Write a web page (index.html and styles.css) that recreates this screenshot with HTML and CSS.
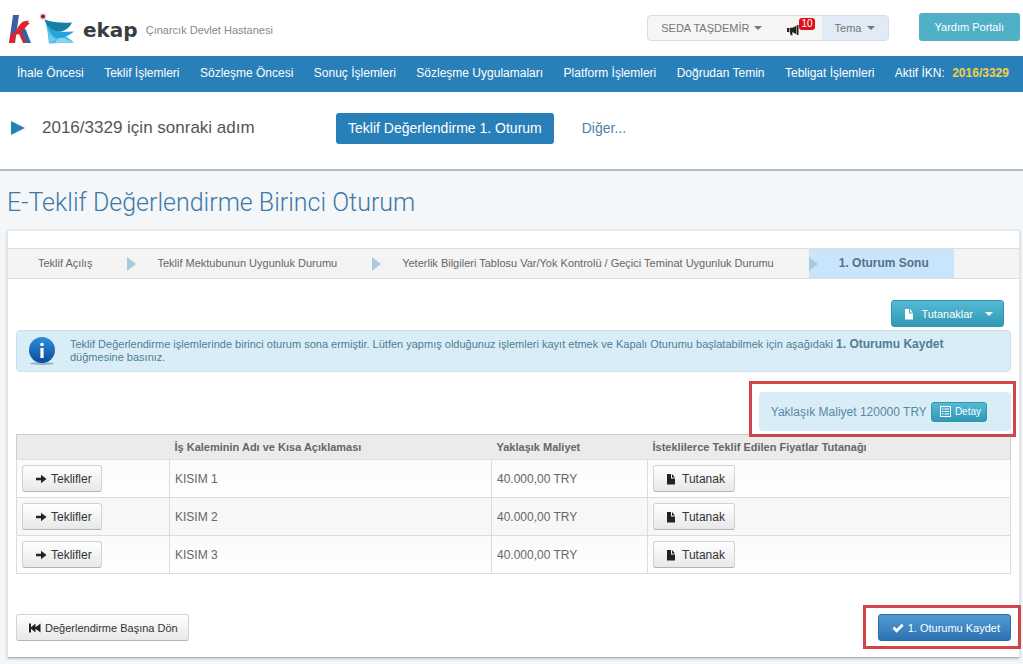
FILE: index.html
```html
<!DOCTYPE html>
<html lang="tr">
<head>
<meta charset="utf-8">
<meta name="viewport" content="width=device-width, initial-scale=1">
<title>E-Teklif Değerlendirme Birinci Oturum</title>
<link rel="stylesheet" href="styles.css">
</head>
<body>
<svg class="sprite" aria-hidden="true">
  <symbol id="i-file" viewBox="0 0 10 12"><path fill="currentColor" d="M1 1h4v4.500h4V11.500H1zM6 1l3 3.500H6z"/></symbol>
  <symbol id="i-arrow" viewBox="0 0 12 10"><path fill="currentColor" d="M1 3.700h5V.800L11.500 5 6 9.200V6.300H1z"/></symbol>
  <symbol id="i-rewind" viewBox="0 0 12 10"><path fill="currentColor" d="M0 .5h2v3.700L6.500.500v3.700L11.500.500v9L6.500 5.800v3.700L2 5.800v3.700H0z"/></symbol>
  <symbol id="i-check" viewBox="0 0 12 10"><path fill="currentColor" d="M.500 5.500 2.500 3.500 4.700 5.700 9.700.700l2 2-7 7z"/></symbol>
  <symbol id="i-horn" viewBox="0 0 12 12"><path fill="currentColor" d="M0 4h2v4H0zM2.500 4C5 4 7.500 3.200 9.500 1.500v9C8 9.300 6.500 8.500 5 8.200l.7 3H3.700L2.800 8zM10 1h1.500v10H10z"/></symbol>
  <symbol id="i-list" viewBox="0 0 11 11"><path fill="currentColor" fill-rule="evenodd" d="M0 0h11v11H0zM1 1v9h9V1zM2 2.500h1.500v1H2zM4.500 2.500H9v1H4.500zM2 5h1.500v1H2zM4.500 5H9v1H4.500zM2 7.500h1.500v1H2zM4.500 7.500H9v1H4.500z"/></symbol>
</svg>

<header class="top">
  <a class="brand" href="#">
    <svg class="mark" viewBox="0 0 66 34" role="img" aria-label="ekap">
      <path fill="#3a5fa5" d="M5 2H11L7 30H1z"/>
      <path fill="#e5202b" d="M2 24Q4 20 8 18L6.500 30H1z"/>
      <path fill="#e5202b" d="M7 22Q9 13 15 8.500L21 7.500 20 10 22 10Q18 13 16.500 16L18 30H15L11 21z"/>
      <path fill="#3a5fa5" d="M13 17.500 17.500 16 23 30H17.500z"/>
      <circle cx="35" cy="3.500" r="3" fill="#f0a3a8"/>
      <circle cx="35" cy="3.500" r="1.700" fill="#6c1725"/>
      <path fill="#4dbce8" d="M37 6.500 53 19 66 29.500 41 30.500Q40 18 37 6.500z"/>
      <path fill="#86d4f2" d="M50 25 56 25 65 29.500 47 30z"/>
      <path fill="#27a3d8" d="M37 7Q42 17 53 19L66 18.500Q60 24 50 25.500 42 24 37 7z"/>
      <path fill="#147ea6" d="M36.500 6.500Q48 10.500 64 9.500 62 15 54 18.500 41 19 36.500 6.500z"/>
      <path fill="#6bcaf0" d="M38 12Q40 22 48 26L42 30.500Q41 20 38 12z"/>
    </svg>
    <span class="brand-name">ekap</span>
    <span class="org">Çınarcık Devlet Hastanesi</span>
  </a>
  <div class="user-bar">
    <button class="user-item user-name">SEDA TAŞDEMİR <i class="caret"></i></button>
    <button class="user-item notices" aria-label="Duyurular"><svg class="icon-horn"><use href="#i-horn"/></svg><span class="badge">10</span></button>
    <button class="user-item theme">Tema <i class="caret"></i></button>
  </div>
  <a class="help" href="#">Yardım Portalı</a>
</header>

<nav class="menu">
  <a href="#">İhale Öncesi</a>
  <a href="#">Teklif İşlemleri</a>
  <a href="#">Sözleşme Öncesi</a>
  <a href="#">Sonuç İşlemleri</a>
  <a href="#">Sözleşme Uygulamaları</a>
  <a href="#">Platform İşlemleri</a>
  <a href="#">Doğrudan Temin</a>
  <a href="#">Tebligat İşlemleri</a>
  <span class="active-ikn">Aktif İKN: <strong>2016/3329</strong></span>
</nav>

<section class="next">
  <i class="play"></i>
  <p class="next-label">2016/3329 için sonraki adım</p>
  <button class="next-btn">Teklif Değerlendirme 1. Oturum</button>
  <a class="next-other" href="#">Diğer...</a>
</section>

<main class="page">
  <h1>E-Teklif Değerlendirme Birinci Oturum</h1>
  <div class="panel">
    <ol class="steps">
      <li>Teklif Açılış</li>
      <li>Teklif Mektubunun Uygunluk Durumu</li>
      <li>Yeterlik Bilgileri Tablosu Var/Yok Kontrolü / Geçici Teminat Uygunluk Durumu</li>
      <li class="current">1. Oturum Sonu</li>
    </ol>
    <div class="content">
      <div class="tools">
        <button class="btn teal"><svg class="icon-file"><use href="#i-file"/></svg>Tutanaklar<i class="caret"></i></button>
      </div>
      <div class="alert">
        <svg class="info" viewBox="0 0 28 30" aria-hidden="true">
          <defs><linearGradient id="ig" x1="0" y1="0" x2="0" y2="1"><stop offset="0" stop-color="#2f8fd8"/><stop offset="1" stop-color="#0a4a9c"/></linearGradient></defs>
          <ellipse cx="14" cy="27.500" rx="12" ry="1.500" fill="#8eb4ca"/>
          <circle cx="14" cy="14" r="13" fill="url(#ig)"/>
          <circle cx="14" cy="8.500" r="1.800" fill="#fff"/>
          <path fill="#fff" d="M12.400 12h3.200v10h-3.200z"/>
        </svg>
        <p>Teklif Değerlendirme işlemlerinde birinci oturum sona ermiştir. Lütfen yapmış olduğunuz işlemleri kayıt etmek ve Kapalı Oturumu başlatabilmek için aşağıdaki <strong>1. Oturumu Kaydet</strong> düğmesine basınız.</p>
      </div>
      <div class="cost">
        <span>Yaklaşık Maliyet 120000 TRY</span>
        <button class="btn teal small"><svg class="icon-list"><use href="#i-list"/></svg>Detay</button>
      </div>
      <table class="parts">
        <colgroup><col class="c-act"><col class="c-name"><col class="c-cost"><col></colgroup>
        <thead>
          <tr><th></th><th>İş Kaleminin Adı ve Kısa Açıklaması</th><th>Yaklaşık Maliyet</th><th>İsteklilerce Teklif Edilen Fiyatlar Tutanağı</th></tr>
        </thead>
        <tbody>
          <tr><td><button class="btn offers"><svg class="icon-arrow"><use href="#i-arrow"/></svg>Teklifler</button></td><td>KISIM 1</td><td>40.000,00 TRY</td><td><button class="btn report"><svg class="icon-file"><use href="#i-file"/></svg>Tutanak</button></td></tr>
          <tr><td><button class="btn offers"><svg class="icon-arrow"><use href="#i-arrow"/></svg>Teklifler</button></td><td>KISIM 2</td><td>40.000,00 TRY</td><td><button class="btn report"><svg class="icon-file"><use href="#i-file"/></svg>Tutanak</button></td></tr>
          <tr><td><button class="btn offers"><svg class="icon-arrow"><use href="#i-arrow"/></svg>Teklifler</button></td><td>KISIM 3</td><td>40.000,00 TRY</td><td><button class="btn report"><svg class="icon-file"><use href="#i-file"/></svg>Tutanak</button></td></tr>
        </tbody>
      </table>
      <div class="actions">
        <button class="btn back"><svg class="icon-arrow"><use href="#i-rewind"/></svg>Değerlendirme Başına Dön</button>
        <div class="save-wrap"><button class="btn save"><svg class="icon-arrow"><use href="#i-check"/></svg>1. Oturumu Kaydet</button></div>
      </div>
    </div>
  </div>
</main>
</body>
</html>
```
FILE: styles.css
```css
* { box-sizing: border-box; }
body {
  margin: 0;
  background: #f3f7fa;
  color: #666;
  font: 12px/18px "Liberation Sans", Arial, sans-serif;
}
a { text-decoration: none; }
button { font-family: inherit; cursor: pointer; }
.sprite { display: none; }
.caret {
  display: inline-block;
  border: 4px solid transparent;
  border-top-color: currentColor;
  border-bottom: 0;
  vertical-align: middle;
}

/* header */
.top {
  display: flex;
  align-items: center;
  height: 56px;
  padding: 0 3px 0 8px;
  background: #fff;
}
.brand { display: flex; align-items: center; flex: 1; padding-top: 4px; color: #888; }
.mark { width: 66px; height: 34px; }
.brand-name {
  margin-left: 9px;
  color: #3c3c3c;
  font: bold 20px/24px "DejaVu Sans", sans-serif;
}
.org { margin-left: 8px; font-size: 11px; }
.user-bar {
  display: flex;
  height: 26px;
  margin-right: 30px;
  border: 1px solid #ddd;
  border-radius: 4px;
  background: #f5f5f5;
  overflow: hidden;
}
.user-item {
  display: flex;
  align-items: center;
  gap: 5px;
  padding: 0 13px;
  border: 0;
  background: none;
  color: #777;
  font-size: 11px;
}
.notices { gap: 0; padding: 0 7px 0 12px; color: #222; }
.icon-horn { width: 12px; height: 12px; margin-top: 4px; }
.badge {
  align-self: flex-start;
  margin-top: 2px;
  padding: 0 2px;
  border-radius: 3px;
  background: #dd1018;
  color: #fff;
  font-size: 10px;
  line-height: 12px;
}
.theme { background: #e1ebf5; }
.help {
  padding: 5px 16px;
  border-radius: 3px;
  background: #50b0c8;
  color: #fff;
  font-size: 11px;
  margin-bottom: 2px;
}

/* menu */
.menu {
  display: flex;
  justify-content: space-between;
  align-items: center;
  height: 36px;
  padding: 0 14px 2px 17px;
  border-bottom: 1px solid #3f78ae;
  background: #2980b9;
  color: #fff;
  white-space: nowrap;
}
.menu a { color: #fff; }
.active-ikn strong { margin-left: 4px; color: #f5cf45; }

/* next step */
.next {
  display: flex;
  align-items: center;
  height: 79px;
  padding: 0 11px 5px;
  border-bottom: 2px solid #b4bcc2;
  background: #fff;
}
.play {
  border: 7px solid transparent;
  border-left: 14px solid #2980b9;
  border-right: 0;
}
.next-label { width: 294px; margin: 0 0 0 17px; color: #555; font-size: 17px; }
.next-btn {
  height: 31px;
  padding: 0 12px;
  border: 0;
  border-radius: 3px;
  background: #2980b9;
  color: #fff;
  font-size: 14px;
}
.next-other { margin-left: 28px; color: #4b7fa8; font-size: 14px; }

/* page */
.page { padding: 0 3px 6px 7px; }
h1 {
  margin: 0;
  padding: 16px 0 11px;
  color: #4178a4;
  font: 300 25px/32px Roboto, sans-serif;
}
.panel {
  padding-top: 17px;
  border: 1px solid #e2e6e9;
  border-bottom-color: #aab0b5;
  border-radius: 2px;
  background: #fff;
  box-shadow: 0 1px 3px rgba(0, 0, 0, 0.2);
}
.steps {
  display: flex;
  margin: 0;
  padding: 0;
  border: solid #ddd;
  border-width: 1px 0;
  background: #f4f4f4;
  font-size: 11px;
  list-style: none;
  white-space: nowrap;
}
.steps li { position: relative; padding: 5px 35px 6px 30px; }
.steps li + li::before {
  content: "";
  position: absolute;
  left: 0;
  top: 8px;
  border: 7px solid transparent;
  border-left: 9px solid #a9cbde;
  border-right: 0;
}
.steps .current {
  padding-right: 25px;
  background: #c9e5fb;
  color: #567089;
  font-size: 12px;
  font-weight: bold;
}
.content { padding: 21px 8px 16px; }

/* buttons */
.btn {
  display: inline-flex;
  align-items: center;
  height: 27px;
  padding: 0 10px 0 12px;
  border: 1px solid #d2d2d2;
  border-bottom-color: #b3b3b3;
  border-radius: 3px;
  background: linear-gradient(#fff, #e8e8e8);
  color: #333;
  font-size: 11px;
  white-space: nowrap;
}
.btn svg { margin-right: 4px; color: #222; }
.btn.report svg { margin-right: 6px; }
.icon-file { width: 10px; height: 12px; }
.icon-list { width: 11px; height: 11px; }
.icon-arrow { width: 12px; height: 10px; }
.btn.teal {
  border-color: #2f96b4;
  background: linear-gradient(#55b9d5, #3199b5);
  color: #fff;
}
.btn.teal svg, .btn.save svg { color: #fff; }
.btn.teal .caret { margin-left: 12px; }
.btn.teal .icon-file { margin-right: 7px; }
.btn.small { height: 20px; padding: 0 5px 0 8px; font-size: 10px; }
.btn.save {
  padding-left: 13px;
  border-color: #2a6ca6;
  background: linear-gradient(#529bd5, #2d72b0);
  color: #fff;
}
.parts .btn { display: flex; padding-right: 9px; font-size: 12px; }
.parts .report { padding-left: 12px; }

.tools { display: flex; justify-content: flex-end; padding: 0 7px 3px 0; }
.alert {
  display: flex;
  align-items: center;
  gap: 14px;
  height: 42px;
  padding: 0 60px 0 11px;
  border: 1px solid #c9e3ee;
  border-radius: 4px;
  background: #d9edf7;
  color: #4f7d95;
}
.alert p { flex: 1; margin: 0; font-size: 11px; line-height: 13px; }
.alert strong { font-size: 12px; }
.info { width: 28px; height: 30px; flex: none; }
.cost {
  position: relative;
  display: flex;
  align-items: center;
  gap: 4px;
  width: fit-content;
  height: 39px;
  margin: 20px 0 3px auto;
  padding: 0 24px 0 12px;
  border-radius: 4px;
  background: #d9edf7;
  color: #5a87a5;
}

/* red highlight frames */
.cost::after, .save-wrap::after {
  content: "";
  position: absolute;
  border: 3px solid #cf4548;
  pointer-events: none;
}
.cost::after { inset: -11px -5px -6px -10px; }
.save-wrap { position: relative; }
.save-wrap::after { inset: -9px -10px -8px -15px; }

/* table */
.parts {
  width: 100%;
  border: 1px solid #ccc;
  border-collapse: collapse;
  table-layout: fixed;
}
.c-act { width: 153px; }
.c-name { width: 322px; }
.c-cost { width: 156px; }
.parts th {
  height: 25px;
  padding: 0 5px;
  background: #ebebeb;
  font-size: 11px;
  text-align: left;
}
.parts td {
  height: 38px;
  padding: 0 5px;
  border: 1px solid #dcdcdc;
  background: linear-gradient(#fafafa, #fff);
}
.parts tr:nth-child(even) td { background: #f7f7f7; }
.actions { display: flex; justify-content: space-between; padding-top: 40px; }
```
